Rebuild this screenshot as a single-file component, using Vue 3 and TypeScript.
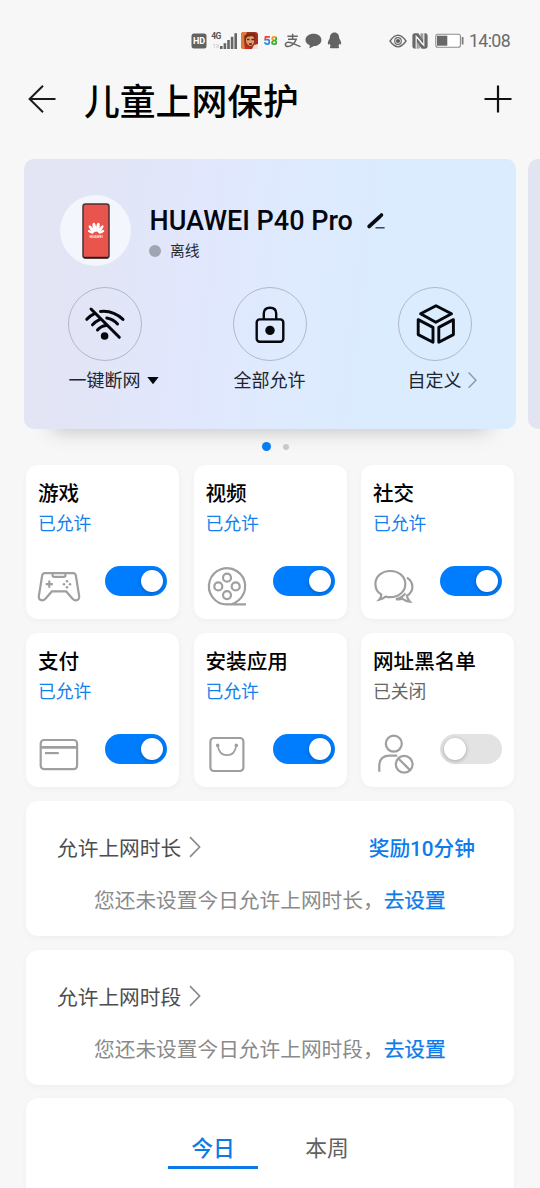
<script setup lang="ts">
import { ref } from 'vue'

type IconName = 'game' | 'video' | 'social' | 'pay' | 'install' | 'blacklist'

interface Tile {
  icon: IconName
  title: string
  allowed: boolean
}

interface LimitCard {
  title: string
  message: string
  reward?: string
}

const tiles = ref<Tile[]>([
  { icon: 'game', title: '游戏', allowed: true },
  { icon: 'video', title: '视频', allowed: true },
  { icon: 'social', title: '社交', allowed: true },
  { icon: 'pay', title: '支付', allowed: true },
  { icon: 'install', title: '安装应用', allowed: true },
  { icon: 'blacklist', title: '网址黑名单', allowed: false },
])

const limits: LimitCard[] = [
  { title: '允许上网时长', message: '您还未设置今日允许上网时长，', reward: '奖励10分钟' },
  { title: '允许上网时段', message: '您还未设置今日允许上网时段，' },
]

const tabs = ['今日', '本周']
const activeTab = ref(0)
</script>

<template>
  <div class="screen">
    <div class="status-bar">
      <svg class="hd" width="16" height="16" viewBox="0 0 16 16">
        <rect x="0.5" y="0.5" width="15" height="15" rx="2.5" fill="#626262" />
        <text x="8" y="11.4" text-anchor="middle" class="hd-text">HD</text>
      </svg>
      <svg class="signal" width="27" height="18" viewBox="0 0 27 18">
        <text x="0.2" y="7.4" class="net-text">4G</text>
        <text x="1.5" y="15.6" class="net-sub">1X</text>
        <g fill="#666">
          <rect x="9" y="14" width="2.6" height="3" />
          <rect x="12.6" y="11.2" width="2.6" height="5.8" />
          <rect x="16.2" y="8" width="2.6" height="9" />
          <rect x="19.8" y="4.8" width="2.6" height="12.2" />
          <rect x="23.4" y="1.2" width="2.6" height="15.8" />
        </g>
      </svg>
      <svg class="game-app" width="17" height="17" viewBox="0 0 17 17">
        <rect width="17" height="17" rx="3" fill="#a52f20" />
        <path d="M0 3Q0 0 3 0H6L3 8L4 17H3Q0 17 0 14Z" fill="#e07a35" />
        <path d="M5 3Q9 0 13 4L13 10Q12 14 9 14Q6 13 5 9Z" fill="#dfa06f" />
        <path d="M3 4Q8 -1 14 2L15 7L11 4L6 5L4 9Z" fill="#7c2b19" />
        <path d="M6 7.5H8.5M10.5 7.5H13M8 12H11" stroke="#5b2116" stroke-width="1.3" />
        <path d="M11 17L13 13L17 12V17Z" fill="#f2e2d6" />
        <path d="M4 14L9 15.5L8 17H4Z" fill="#d3261d" />
      </svg>
      <div class="fifty-eight"><span class="five">5</span><span class="eight">8</span></div>
      <svg class="alipay" width="17" height="16" viewBox="0 0 17 16" fill="none" stroke="#666" stroke-width="1.5">
        <path d="M3.4 3.2H13.8M8.6 0.8V6.2M4 6.2H12.2Q11 9.8 7.8 12.2Q4.6 14.4 2 13Q0.6 11.4 2.4 9.7Q4.4 8.6 8 10.1L16.4 13.6" />
      </svg>
      <svg class="bubble" width="17" height="16" viewBox="0 0 17 16">
        <path d="M8.5 0.8C13 0.8 16.4 3.4 16.4 6.9C16.4 10.4 13 13 8.8 13C7.4 13.8 5.6 15 4.3 15.2C4.8 14 4.9 13.2 4.6 12.1C2 11 0.5 9.2 0.5 6.9C0.5 3.4 4 0.8 8.5 0.8Z" fill="#636363" />
      </svg>
      <svg class="qq" width="15" height="17" viewBox="0 0 15 17">
        <path d="M7.5 0.5C10.6 0.5 12.2 2.8 12.2 6.2C13.6 8.4 14.6 10.6 14 12.2C13.6 12.8 12.9 12 12.5 11.4C12.3 12.6 11.8 13.4 11.2 14C12.4 14.6 12.6 16 11 16.3H4C2.4 16 2.6 14.6 3.8 14C3.2 13.4 2.7 12.6 2.5 11.4C2.1 12 1.4 12.8 1 12.2C0.4 10.6 1.4 8.4 2.8 6.2C2.8 2.8 4.4 0.5 7.5 0.5Z" fill="#636363" />
      </svg>
      <div class="status-gap"></div>
      <svg class="eye" width="18" height="14" viewBox="0 0 18 14">
        <path d="M1 7Q9 -4.4 17 7Q9 18.4 1 7Z" fill="none" stroke="#6a6a6a" stroke-width="1.4" />
        <circle cx="9" cy="7" r="3.3" fill="none" stroke="#6a6a6a" stroke-width="1.2" />
        <circle cx="9" cy="7" r="2.1" fill="#5c5c5c" />
      </svg>
      <svg class="nfc" width="16" height="16" viewBox="0 0 16 16">
        <rect x="0.4" y="0.3" width="15.2" height="15.4" rx="2.4" fill="#686868" />
        <path d="M4.2 16V3.4L11 11.6" fill="none" stroke="#f7f7f7" stroke-width="1.2" />
        <path d="M5 4.2L11.8 12.4V0" fill="none" stroke="#f7f7f7" stroke-width="1.2" />
        <path d="M6.2 0H10.4V6.6ZM5.6 16H9.8L5.6 9.4Z" fill="#f7f7f7" />
        <path d="M7 9V15.4M9.2 0.6V7" stroke="#777" stroke-width="1.2" />
      </svg>
      <svg class="battery" width="29" height="16" viewBox="0 0 29 16">
        <rect x="0.8" y="1.2" width="24.6" height="13" rx="2" fill="#fff" stroke="#8c8c8c" stroke-width="1.1" />
        <rect x="2" y="2.7" width="10.3" height="10" fill="#686868" />
        <rect x="26.7" y="4" width="1.8" height="7.6" rx="0.6" fill="#7a7a7a" />
      </svg>
      <span class="clock">14:08</span>
    </div>

    <header class="app-header">
      <svg width="28" height="28" viewBox="0 0 28 28" fill="none" stroke="#1b1b1b" stroke-width="2">
        <path d="M27.5 14H2M15 0.8L1.6 14L15 27.2" />
      </svg>
      <h1>儿童上网保护</h1>
      <svg width="28" height="28" viewBox="0 0 28 28" fill="none" stroke="#111" stroke-width="2.2">
        <path d="M14 0.5V27.5M0.5 14H27.5" />
      </svg>
    </header>

    <div class="carousel">
      <section class="device-card">
        <div class="device">
          <div class="avatar">
            <svg width="28" height="56" viewBox="0 0 28 56">
              <rect x="1" y="1" width="26" height="54" rx="2.5" fill="#e9544c" stroke="#4b3032" stroke-width="1.5" />
              <path d="M2 54.6H26" stroke="#1f1c22" stroke-width="1.6" />
              <g fill="#fff">
                <ellipse cx="12.4" cy="24.4" rx="1.7" ry="4.6" transform="rotate(-10 12.4 24.4)" />
                <ellipse cx="15.8" cy="24.4" rx="1.7" ry="4.6" transform="rotate(10 15.8 24.4)" />
                <ellipse cx="9.6" cy="26" rx="1.5" ry="4.4" transform="rotate(-36 9.6 26)" />
                <ellipse cx="18.6" cy="26" rx="1.5" ry="4.4" transform="rotate(36 18.6 26)" />
                <ellipse cx="8.7" cy="28.9" rx="1.2" ry="3.1" transform="rotate(-65 8.7 28.9)" />
                <ellipse cx="19.5" cy="28.9" rx="1.2" ry="3.1" transform="rotate(65 19.5 28.9)" />
              </g>
              <text x="14.1" y="35" text-anchor="middle" class="phone-brand">HUAWEI</text>
            </svg>
          </div>
          <div class="device-info">
            <div class="device-name">
              <span>HUAWEI P40 Pro</span>
              <svg width="20" height="18" viewBox="0 0 20 18">
                <path d="M3.2 14.4L13.6 4.8" stroke="#060a14" stroke-width="3.8" stroke-linecap="round" />
                <path d="M15 3.5L15.5 3" stroke="#060a14" stroke-width="3.6" stroke-linecap="round" />
                <path d="M9.5 15.8H18.6" stroke="#2e3848" stroke-width="1.4" />
              </svg>
            </div>
            <div class="device-state"><i></i><span>离线</span></div>
          </div>
        </div>

        <div class="actions">
          <button class="action">
            <span class="ring">
              <svg width="42" height="42" viewBox="0 0 42 42" fill="none" stroke="#05070c" stroke-width="3" stroke-linecap="round">
                <path d="M7 6L35.3 34.3" />
                <path d="M16.5 8.4Q29 7 39 16.4" />
                <path d="M2.8 16.3Q6 12.6 10.5 10.6" />
                <path d="M22.8 15Q29.5 16.3 33.5 21" />
                <path d="M8.5 21.8Q11.6 18.4 16 16.4" />
                <path d="M13.5 27Q16.5 23 22 22.4" />
                <circle cx="20.6" cy="33" r="3.8" fill="#05070c" stroke="none" />
              </svg>
            </span>
            <span class="label">一键断网
              <svg class="trail" width="12" height="8" viewBox="0 0 12 8"><path d="M0.3 0.3H11.7L6 7.6Z" fill="#05070c" /></svg>
            </span>
          </button>
          <button class="action">
            <span class="ring">
              <svg width="42" height="42" viewBox="0 0 42 42" fill="none" stroke="#05070c" stroke-width="2.4">
                <rect x="7.7" y="16.4" width="26.6" height="22.4" rx="3" />
                <path d="M14.8 16.4V10.6Q14.8 4.8 21 4.8Q27.2 4.8 27.2 10.6V16.4" />
                <circle cx="21" cy="27.4" r="4.7" fill="#05070c" stroke="none" />
              </svg>
            </span>
            <span class="label">全部允许</span>
          </button>
          <button class="action">
            <span class="ring">
              <svg width="42" height="42" viewBox="0 0 42 42" fill="none" stroke="#05070c" stroke-width="2.9" stroke-linejoin="round">
                <path d="M22 2.7L37.5 10.8L21.8 19.2L6.6 10.8Z" />
                <path d="M4.2 16.6L19 24.4V39.2L4.2 31.6Z" />
                <path d="M39.4 16.6L24.8 24.4V39.2L39.4 31.6Z" />
              </svg>
            </span>
            <span class="label">自定义
              <svg class="trail" width="9" height="17" viewBox="0 0 9 17" fill="none" stroke="#8c98a5" stroke-width="1.4"><path d="M0.6 0.8L8 8.5L0.6 16.2" /></svg>
            </span>
          </button>
        </div>
      </section>
      <section class="next-card"></section>
    </div>

    <div class="dots"><i class="on"></i><i></i></div>

    <main class="content">
      <div class="tiles">
        <article v-for="tile in tiles" :key="tile.icon" class="tile">
          <h2>{{ tile.title }}</h2>
          <p :class="{ allowed: tile.allowed }">{{ tile.allowed ? '已允许' : '已关闭' }}</p>
          <div class="tile-foot">
            <svg width="44" height="44" viewBox="0 0 44 44" class="tile-icon">
              <template v-if="tile.icon === 'game'">
                <path d="M8 9.1H36Q38.3 9.1 38.8 11.3L42.2 32.4Q42.5 36.2 38.6 36.4Q37 36.4 35.8 34.9L29.2 27.4H14.8L8.2 34.9Q7 36.4 5.2 36.4Q1.6 36.2 1.8 32.4L5.2 11.3Q5.7 9.1 8 9.1Z" />
                <path d="M15.6 9.1V11.2Q15.6 12.8 17.2 12.8H26.8Q28.4 12.8 28.4 11.2V9.1" />
                <path d="M12.3 16.6V23.8M8.7 20.2H15.9" />
                <g class="solid">
                  <circle cx="30" cy="17.2" r="1.3" /><circle cx="27" cy="20.2" r="1.3" />
                  <circle cx="33" cy="20.2" r="1.3" /><circle cx="30" cy="23.2" r="1.3" />
                </g>
              </template>
              <template v-else-if="tile.icon === 'video'">
                <path d="M41 40.4H22A18.1 18.1 0 1 1 33.5 36.3Q30.6 39 26.5 40.2" />
                <circle cx="22" cy="13.7" r="4" /><circle cx="13.3" cy="22.4" r="4" />
                <circle cx="30.7" cy="22.4" r="4" /><circle cx="22" cy="31.1" r="4" />
              </template>
              <template v-else-if="tile.icon === 'social'">
                <path d="M18.3 7C26.8 7 33.3 12.4 33.3 20C33.3 27.8 26.7 33.2 18.3 33.2C16.6 33.2 15 33 13.6 32.6Q10.8 34.8 7.2 35.7Q9.5 33 9.3 30.5C5.4 28.2 3.4 24.5 3.4 20C3.4 12.4 9.9 7 18.3 7Z" />
                <path d="M35 13.6C38.6 16 40.4 19.2 40.4 22.8C40.4 26.5 38.5 29.7 35 31.7Q35.2 35 37.8 37.6Q33.6 37.2 30.6 34.8Q27.5 35.8 24 35.2Q30.5 33.4 33.5 29.3" />
              </template>
              <template v-else-if="tile.icon === 'pay'">
                <rect x="3.7" y="8" width="36.4" height="29.2" rx="3.4" />
                <path d="M3.7 15.4H40.1" class="heavy" />
                <path d="M8 21.1H21.8" />
              </template>
              <template v-else-if="tile.icon === 'install'">
                <rect x="5.4" y="6" width="33" height="33" rx="3.4" />
                <path d="M12.8 13.6C13.6 20 17 23.2 22 23.2C27 23.2 30.4 20 31.2 13.6" class="thin" />
                <g class="solid"><circle cx="12.7" cy="13.4" r="1.8" /><circle cx="31.3" cy="13.4" r="1.8" /></g>
              </template>
              <template v-else>
                <circle cx="21.8" cy="11.7" r="8" />
                <path d="M7.3 39.8V34Q7.3 23.6 17.7 23.6H25.2" />
                <circle cx="32.2" cy="32.3" r="8.4" />
                <path d="M26.4 26.5L38 38.1" />
              </template>
            </svg>
            <button class="toggle" :class="{ on: tile.allowed }" role="switch" :aria-checked="tile.allowed" @click="tile.allowed = !tile.allowed"><i></i></button>
          </div>
        </article>
      </div>

      <section v-for="limit in limits" :key="limit.title" class="limit">
        <div class="limit-head">
          <span>{{ limit.title }}</span>
          <svg width="12" height="22" viewBox="0 0 12 22" fill="none" stroke="#8b8b8b" stroke-width="1.7"><path d="M1 1.2L10.6 11L1 20.8" /></svg>
          <a v-if="limit.reward">{{ limit.reward }}</a>
        </div>
        <p class="limit-message">{{ limit.message }}<a>去设置</a></p>
      </section>

      <section class="report">
        <nav>
          <button v-for="(tab, index) in tabs" :key="tab" :class="{ active: index === activeTab }" @click="activeTab = index">{{ tab }}</button>
        </nav>
      </section>
    </main>
  </div>
</template>

<style>
html,
body {
  margin: 0;
  overflow: hidden;
  background: #f7f7f7;
}
</style>

<style scoped>
.screen {
  width: 540px;
  height: 1188px;
  overflow: hidden;
  background: #f7f7f7;
  color: #000;
  font-family: Roboto, 'Noto Sans CJK SC', sans-serif;
}

.screen * {
  box-sizing: border-box;
}

svg {
  display: block;
  flex: none;
}

button {
  padding: 0;
  border: 0;
  background: none;
  color: inherit;
  font: inherit;
}

.status-bar {
  display: flex;
  align-items: center;
  height: 60px;
  padding: 21px 30px 0 191px;
}

.hd-text {
  fill: #fff;
  font-size: 9px;
  font-weight: 700;
}

.signal {
  margin-left: 4px;
}

.net-text {
  fill: #555;
  font-size: 8.5px;
  font-weight: 700;
  letter-spacing: -0.6px;
}

.net-sub {
  fill: #c4c4c4;
  font-size: 6px;
}

.game-app {
  margin-left: 3px;
}

.fifty-eight {
  width: 14px;
  margin-left: 5.5px;
  font-size: 13px;
  line-height: 16px;
  font-weight: 900;
  letter-spacing: -0.6px;
}

.five {
  background: linear-gradient(180deg, #e8452f 50%, #2889e8 50%);
  background-clip: text;
  color: transparent;
}

.eight {
  background: linear-gradient(135deg, #f09a20 45%, #39ad3d 50%);
  background-clip: text;
  color: transparent;
}

.alipay {
  margin-left: 6px;
}

.bubble {
  margin-left: 4px;
}

.qq {
  margin-left: 5px;
}

.status-gap {
  flex: 1;
}

.nfc {
  margin-left: 5px;
}

.battery {
  margin-left: 7px;
}

.clock {
  width: 41px;
  margin-left: 5px;
  color: #6b6b6b;
  font-size: 17.8px;
  line-height: 20px;
  letter-spacing: -0.65px;
  white-space: nowrap;
}

.app-header {
  display: flex;
  align-items: center;
  height: 78px;
  padding: 0 28px;
}

h1 {
  flex: 1;
  margin: 7px 0 0 28px;
  font-size: 35.8px;
  line-height: 50px;
  font-weight: 500;
}

.carousel {
  display: flex;
  gap: 12px;
  width: 540px;
  margin-top: 21px;
  padding-left: 24px;
}

.device-card {
  flex: none;
  width: 492px;
  height: 270px;
  padding: 36px 44.5px 0 43.5px;
  border-radius: 10px;
  background: linear-gradient(97deg, #e4e4f3 0%, #e2e5f6 16%, #e1e7fd 35%, #dfeafd 52%, #daecfe 72%, #daecfe 100%);
  box-shadow: 0 28px 20px -28px rgba(0, 0, 0, 0.25);
}

.next-card {
  flex: none;
  width: 492px;
  height: 270px;
  border-radius: 10px;
  background: #e3e4f2;
}

.device {
  display: flex;
  height: 92px;
  margin-left: -7.5px;
}

.avatar {
  display: flex;
  align-items: center;
  justify-content: center;
  width: 71px;
  height: 71px;
  border-radius: 50%;
  background: #f3f6fc;
}

.phone-brand {
  fill: #fff;
  font-size: 3.6px;
  font-weight: 500;
}

.device-info {
  margin-left: 18.5px;
}

.device-name {
  display: flex;
  align-items: center;
  height: 38px;
  margin-top: 7px;
  color: #05070f;
  font-size: 27px;
  font-weight: 500;
  white-space: nowrap;
}

.device-name svg {
  margin-left: 13px;
}

.device-state {
  display: flex;
  align-items: center;
  gap: 9px;
  margin-top: -1px;
  color: #252a35;
  font-size: 14.8px;
  line-height: 24px;
}

.device-state i {
  width: 12px;
  height: 12px;
  margin-left: -0.5px;
  border-radius: 50%;
  background: #a0a5b3;
}

.actions {
  display: flex;
  justify-content: space-between;
}

.action {
  display: flex;
  flex-direction: column;
  align-items: center;
  width: 74px;
}

.ring {
  display: flex;
  align-items: center;
  justify-content: center;
  width: 74px;
  height: 74px;
  border: 1.5px solid #b2b8c8;
  border-radius: 50%;
}

.label {
  position: relative;
  margin-top: 7px;
  color: #20242d;
  font-size: 18px;
  line-height: 26px;
  white-space: nowrap;
}

.trail {
  position: absolute;
  top: 50%;
  left: calc(100% + 6px);
  transform: translateY(-55%);
}

.dots {
  display: flex;
  align-items: center;
  justify-content: center;
  gap: 12px;
  height: 36px;
  padding: 0 0 1px 11px;
}

.dots i {
  width: 6px;
  height: 6px;
  border-radius: 50%;
  background: #c8c8c8;
}

.dots .on {
  width: 9px;
  height: 9px;
  background: #0a7cf2;
}

.content {
  padding: 0 26px;
}

.tiles {
  display: grid;
  grid-template-columns: repeat(3, 153px);
  justify-content: space-between;
  row-gap: 14px;
}

.tile,
.limit,
.report {
  border-radius: 12px;
  background: #fff;
  box-shadow: 0 2px 6px rgba(0, 0, 0, 0.035);
}

.tile {
  height: 154px;
  padding: 14px 12px 0;
}

h2 {
  margin: 0;
  font-size: 20.6px;
  line-height: 30px;
  font-weight: 500;
  white-space: nowrap;
}

.tile p {
  margin: 1px 0 0;
  color: #666;
  font-size: 17.8px;
  line-height: 28px;
}

.tile .allowed {
  color: #1480ee;
}

.tile-foot {
  display: flex;
  justify-content: space-between;
  margin: 26px 0 0 -1px;
}

.tile-icon {
  fill: none;
  stroke: #9f9f9f;
  stroke-width: 2.2;
}

.heavy {
  stroke-width: 2.8;
}

.thin {
  stroke-width: 1.7;
}

.solid {
  fill: #9f9f9f;
  stroke: none;
}

.toggle {
  display: flex;
  width: 62px;
  height: 30px;
  margin-top: 2px;
  padding: 4px;
  border-radius: 15px;
  background: #e3e3e3;
}

.toggle i {
  width: 22px;
  height: 22px;
  border-radius: 50%;
  background: #fff;
  box-shadow: 0 1px 4px rgba(0, 0, 0, 0.28);
}

.toggle.on {
  justify-content: flex-end;
  background: #007dff;
}

.limit {
  height: 135px;
  margin-top: 14px;
  padding: 32px 39px 0 31px;
}

.limit-head {
  display: flex;
  align-items: center;
  color: #4d4d4d;
  font-size: 20.7px;
  line-height: 32px;
}

.limit-head svg {
  margin: -4px 0 0 8px;
}

a {
  color: #0d7bea;
}

.limit-head a {
  margin-left: auto;
  font-weight: 500;
}

.limit-message a {
  -webkit-text-stroke: 0.25px #0d7bea;
}

.limit-message {
  margin: 20px -10px 0 37px;
  color: #8a8a8a;
  font-size: 20.7px;
  line-height: 32px;
  white-space: nowrap;
}

.report {
  height: 200px;
  margin-top: 13px;
}

nav {
  display: flex;
  gap: 24px;
  padding: 28px 0 0 142px;
}

nav button {
  width: 90px;
  height: 43px;
  border-bottom: 3px solid transparent;
  color: #606060;
  font-size: 21.8px;
}

nav .active {
  border-color: #0b7ae6;
  color: #0b7ae6;
  font-weight: 500;
}
</style>
